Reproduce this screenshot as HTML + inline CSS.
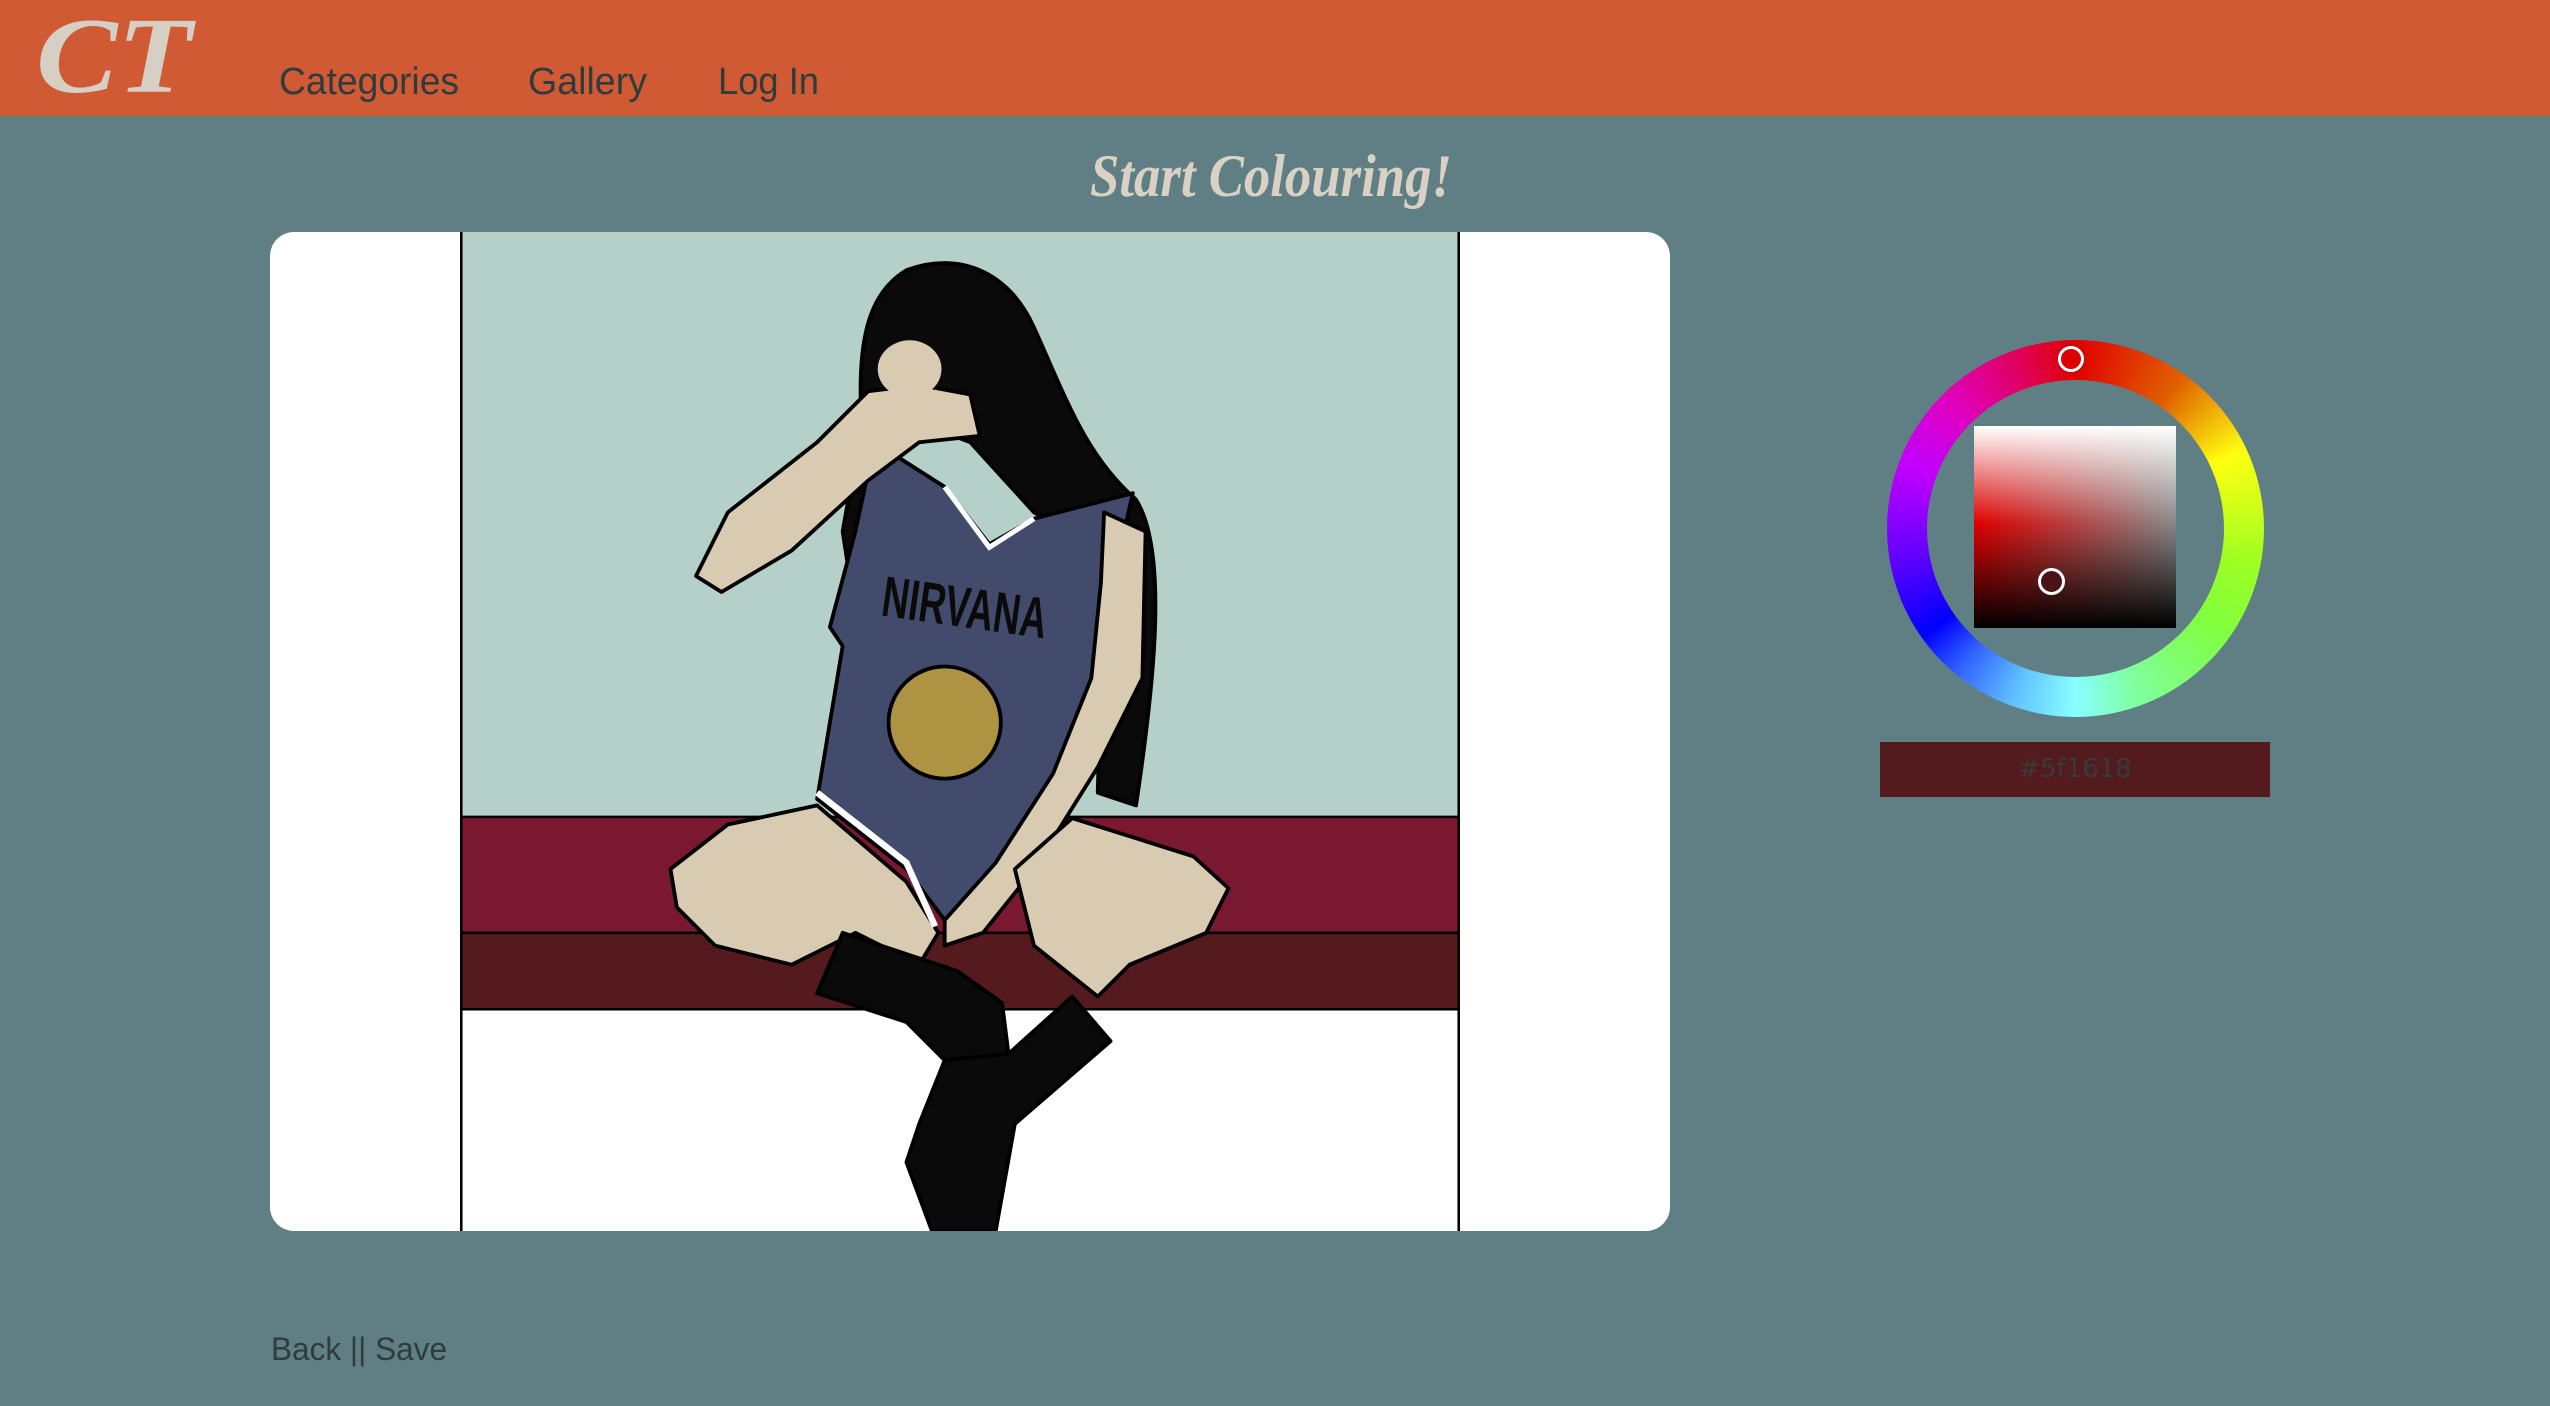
<!DOCTYPE html>
<html><head><meta charset="utf-8"><style>
html,body{margin:0;padding:0;}
body{width:2550px;height:1406px;background:#5f7f85;position:relative;overflow:hidden;font-family:"Liberation Sans",sans-serif;}
.hdr{position:absolute;left:0;top:0;width:2550px;height:116px;background:#d05a34;}
.card{position:absolute;left:270px;top:232px;width:1400px;height:999px;background:#fff;border-radius:24px;overflow:hidden;}
.hex{position:absolute;left:1880px;top:742px;width:390px;height:55px;background:#531b1d;color:#3a3a3a;font:26px "DejaVu Sans",sans-serif;text-align:center;line-height:55px;}
.ring{position:absolute;left:1887px;top:340px;width:377px;height:377px;border-radius:50%;
background:conic-gradient(from 0deg,#e00000,#e06000 35deg,#ffff10 65deg,#a0ff20 100deg,#80ff40 125deg,#80ffa0 160deg,#88ffff 180deg,#60c0ff 200deg,#3060ff 220deg,#0000ff 235deg,#6000ff 260deg,#c000ff 290deg,#e000c0 315deg,#e00060 340deg,#e00000);}
.hole{position:absolute;left:1927px;top:380px;width:297px;height:297px;border-radius:50%;background:#5f7f85;}
.sv{position:absolute;left:1974px;top:426px;width:202px;height:202px;
background:linear-gradient(to bottom,#fff 0%,rgba(255,255,255,0) 48%,rgba(0,0,0,0) 48%,#000 100%),linear-gradient(to right,#e00000,#888);}
.mk{position:absolute;border:3px solid #fff;border-radius:50%;box-shadow:0 0 2px #333;}
svg{position:absolute;left:0;top:0;}
</style></head><body>
<div class="hdr"></div>
<svg width="2550" height="240" style="z-index:2">
<text x="36" y="92" font-family="Liberation Serif,serif" font-style="italic" font-weight="bold" font-size="108" fill="#d6d0c4" textLength="156" lengthAdjust="spacingAndGlyphs">CT</text>
<g font-family="Liberation Sans,sans-serif" font-size="38" fill="#2f3b3c">
<text x="279" y="94" textLength="180" lengthAdjust="spacingAndGlyphs">Categories</text>
<text x="528" y="94" textLength="119" lengthAdjust="spacingAndGlyphs">Gallery</text>
<text x="718" y="94" textLength="101" lengthAdjust="spacingAndGlyphs">Log In</text>
</g>
<text x="1090" y="196" font-family="Liberation Serif,serif" font-style="italic" font-weight="bold" font-size="60" fill="#d9d2c4" textLength="362" lengthAdjust="spacingAndGlyphs">Start Colouring!</text>
</svg>
<div class="card">
<svg style="left:190px;top:0" width="1000" height="999" viewBox="0 0 1568 1568" preserveAspectRatio="none">
<rect x="0" y="0" width="1568" height="918" fill="#b5cfc9"/>
<rect x="0" y="918" width="1568" height="182" fill="#7a1832"/>
<rect x="0" y="1100" width="1568" height="120" fill="#541a1d"/>
<rect x="0" y="1220" width="1568" height="348" fill="#fff"/>
<line x1="0" y1="918" x2="1568" y2="918" stroke="#000" stroke-width="4"/>
<line x1="0" y1="1100" x2="1568" y2="1100" stroke="#000" stroke-width="4"/>
<line x1="0" y1="1220" x2="1568" y2="1220" stroke="#000" stroke-width="4"/>
<line x1="2" y1="0" x2="2" y2="1568" stroke="#000" stroke-width="4"/>
<line x1="1566" y1="0" x2="1566" y2="1568" stroke="#000" stroke-width="4"/>
<g stroke="#000" stroke-width="6" stroke-linejoin="round">
<path d="M700,60 C780,30 860,60 900,150 C950,260 980,350 1060,420 C1110,500 1090,700 1060,900 L1000,880 L1010,500 L900,440 L800,330 L720,300 L640,420 L620,600 L600,470 L630,300 C620,150 650,90 700,60 Z" fill="#0a0a0a"/>
<path d="M650,330 L760,400 L830,490 L900,450 L1055,410 L1000,650 L960,850 L880,960 L760,1080 L700,1000 L560,890 L600,650 L580,620 L620,470 Z" fill="#424b6b"/>
<path d="M1010,440 L1075,470 L1070,700 L1000,840 L900,1000 L820,1100 L760,1120 L760,1080 L840,990 L930,850 L990,700 L1005,550 Z" fill="#d9cab2"/>
<path d="M370,540 L420,440 L560,330 L640,250 L720,240 L800,255 L815,320 L720,330 L640,390 L520,500 L410,565 Z" fill="#d9cab2"/>
<path d="M330,1000 L420,930 L560,900 L700,1020 L750,1100 L720,1150 L620,1100 L520,1150 L400,1120 L340,1060 Z" fill="#d9cab2"/>
<path d="M870,1000 L960,920 L1150,980 L1205,1030 L1170,1100 L1050,1150 L1000,1200 L900,1120 Z" fill="#d9cab2"/>
<path d="M600,1100 L780,1160 L850,1210 L860,1290 L760,1300 L700,1240 L560,1195 Z" fill="#0a0a0a"/>
<path d="M700,1460 L740,1568 L840,1568 L870,1400 L1020,1270 L960,1200 L860,1290 L760,1300 L720,1400 Z" fill="#0a0a0a"/>
<circle cx="760" cy="770" r="88" fill="#ae9442"/>
</g>
<path d="M760,400 L830,495 L900,450" fill="none" stroke="#fff" stroke-width="8"/>
<path d="M560,880 L700,990 L745,1090" fill="none" stroke="#fff" stroke-width="10"/>
<ellipse cx="705" cy="215" rx="50" ry="45" fill="#d9cab2"/>
<text x="660" y="620" font-family="Liberation Sans,sans-serif" font-weight="bold" font-size="90" fill="#0a0a0a" transform="rotate(8 790 600)" textLength="260" lengthAdjust="spacingAndGlyphs">NIRVANA</text>
</svg>
</div>
<div class="ring"></div>
<div class="hole"></div>
<div class="sv"></div>
<div class="mk" style="left:2058px;top:346px;width:20px;height:20px;background:#d00;"></div>
<div class="mk" style="left:2038px;top:568px;width:21px;height:21px;background:#4a1416;"></div>
<svg width="2550" height="1406" style="z-index:1;pointer-events:none">
<text x="271" y="1360" font-family="Liberation Sans,sans-serif" font-size="32" fill="#2f3b3c" textLength="176" lengthAdjust="spacingAndGlyphs">Back || Save</text>
</svg>
<div class="hex" style="z-index:3">#5f1618</div>
</body></html>
